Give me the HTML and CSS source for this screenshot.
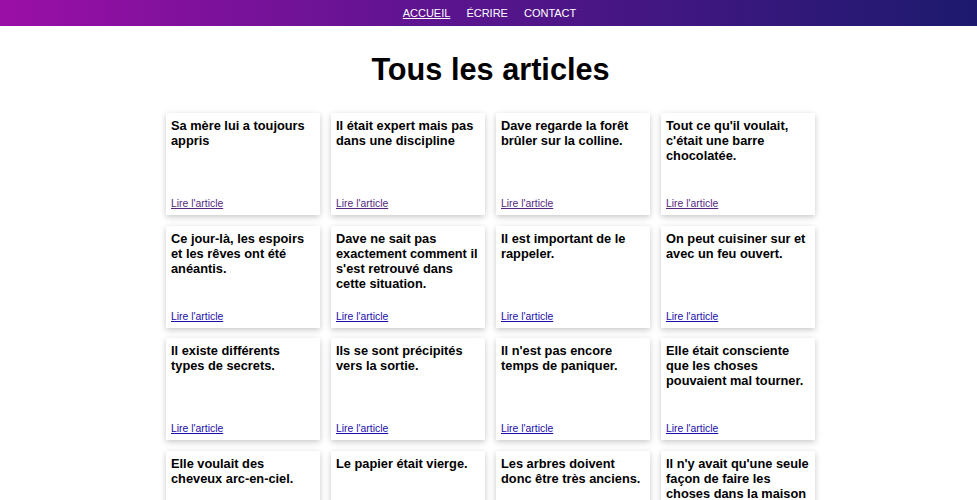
FILE: index.html
```html
<!DOCTYPE html>
<html lang="fr">
<head>
<meta charset="utf-8">
<title>Tous les articles</title>
<link rel="stylesheet" href="styles.css">
</head>
<body>
<header class="topbar">
  <nav class="nav">
    <a href="#" class="nav-link active">Accueil</a>
    <a href="#" class="nav-link">Écrire</a>
    <a href="#" class="nav-link">Contact</a>
  </nav>
</header>
<main class="page">
  <h1 class="page-title">Tous les articles</h1>
  <section class="grid">
    <article class="card"><h2 class="card-title">Sa mère lui a toujours appris</h2><a href="#" class="card-link visited">Lire l'article</a></article>
    <article class="card"><h2 class="card-title">Il était expert mais pas dans une discipline</h2><a href="#" class="card-link visited">Lire l'article</a></article>
    <article class="card"><h2 class="card-title">Dave regarde la forêt brûler sur la colline.</h2><a href="#" class="card-link visited">Lire l'article</a></article>
    <article class="card"><h2 class="card-title">Tout ce qu'il voulait, c'était une barre chocolatée.</h2><a href="#" class="card-link visited">Lire l'article</a></article>
    <article class="card"><h2 class="card-title">Ce jour-là, les espoirs et les rêves ont été anéantis.</h2><a href="#" class="card-link">Lire l'article</a></article>
    <article class="card"><h2 class="card-title">Dave ne sait pas exactement comment il s'est retrouvé dans cette situation.</h2><a href="#" class="card-link">Lire l'article</a></article>
    <article class="card"><h2 class="card-title">Il est important de le rappeler.</h2><a href="#" class="card-link">Lire l'article</a></article>
    <article class="card"><h2 class="card-title">On peut cuisiner sur et avec un feu ouvert.</h2><a href="#" class="card-link">Lire l'article</a></article>
    <article class="card"><h2 class="card-title">Il existe différents types de secrets.</h2><a href="#" class="card-link">Lire l'article</a></article>
    <article class="card"><h2 class="card-title">Ils se sont précipités vers la sortie.</h2><a href="#" class="card-link">Lire l'article</a></article>
    <article class="card"><h2 class="card-title">Il n'est pas encore temps de paniquer.</h2><a href="#" class="card-link">Lire l'article</a></article>
    <article class="card"><h2 class="card-title">Elle était consciente que les choses pouvaient mal tourner.</h2><a href="#" class="card-link">Lire l'article</a></article>
    <article class="card"><h2 class="card-title">Elle voulait des cheveux arc-en-ciel.</h2><a href="#" class="card-link">Lire l'article</a></article>
    <article class="card"><h2 class="card-title">Le papier était vierge.</h2><a href="#" class="card-link">Lire l'article</a></article>
    <article class="card"><h2 class="card-title">Les arbres doivent donc être très anciens.</h2><a href="#" class="card-link">Lire l'article</a></article>
    <article class="card"><h2 class="card-title">Il n'y avait qu'une seule façon de faire les choses dans la maison</h2><a href="#" class="card-link">Lire l'article</a></article>
  </section>
</main>
</body>
</html>
```

FILE: styles.css
```css
html, body {
  margin: 0;
  padding: 0;
  background: #ffffff;
  font-family: "Liberation Sans", Arial, sans-serif;
  color: #000;
}

.topbar {
  height: 26px;
  background: linear-gradient(90deg, #9b0fa7 0%, #5c148f 45%, #1c1a6e 100%);
  display: flex;
  align-items: center;
  justify-content: center;
}

.nav {
  display: flex;
  gap: 16px;
  padding-left: 2px;
}

.nav-link {
  color: #ffffff;
  text-decoration: none;
  text-transform: uppercase;
  font-size: 11px;
  line-height: 13px;
}

.nav-link.active {
  text-decoration: underline;
}

.page {
  display: flex;
  flex-direction: column;
  align-items: center;
  padding-left: 4px;
}

.page-title {
  font-size: 30.7px;
  font-weight: bold;
  margin: 26px 0 26px;
  line-height: 35px;
}

.grid {
  display: grid;
  grid-template-columns: repeat(4, 154px);
  column-gap: 11px;
  row-gap: 10.5px;
}

.card {
  box-sizing: border-box;
  height: 102px;
  padding: 5px;
  background: #fff;
  box-shadow: 0 2px 6px rgba(0, 0, 0, 0.22);
  display: flex;
  flex-direction: column;
  justify-content: space-between;
}

.card-title {
  margin: 0;
  font-size: 12.8px;
  line-height: 15px;
  font-weight: bold;
}

.card-link {
  font-size: 10.4px;
  line-height: 12px;
  color: #1a0dab;
  text-decoration: underline;
}

.card-link.visited {
  color: #56277f;
}
```
